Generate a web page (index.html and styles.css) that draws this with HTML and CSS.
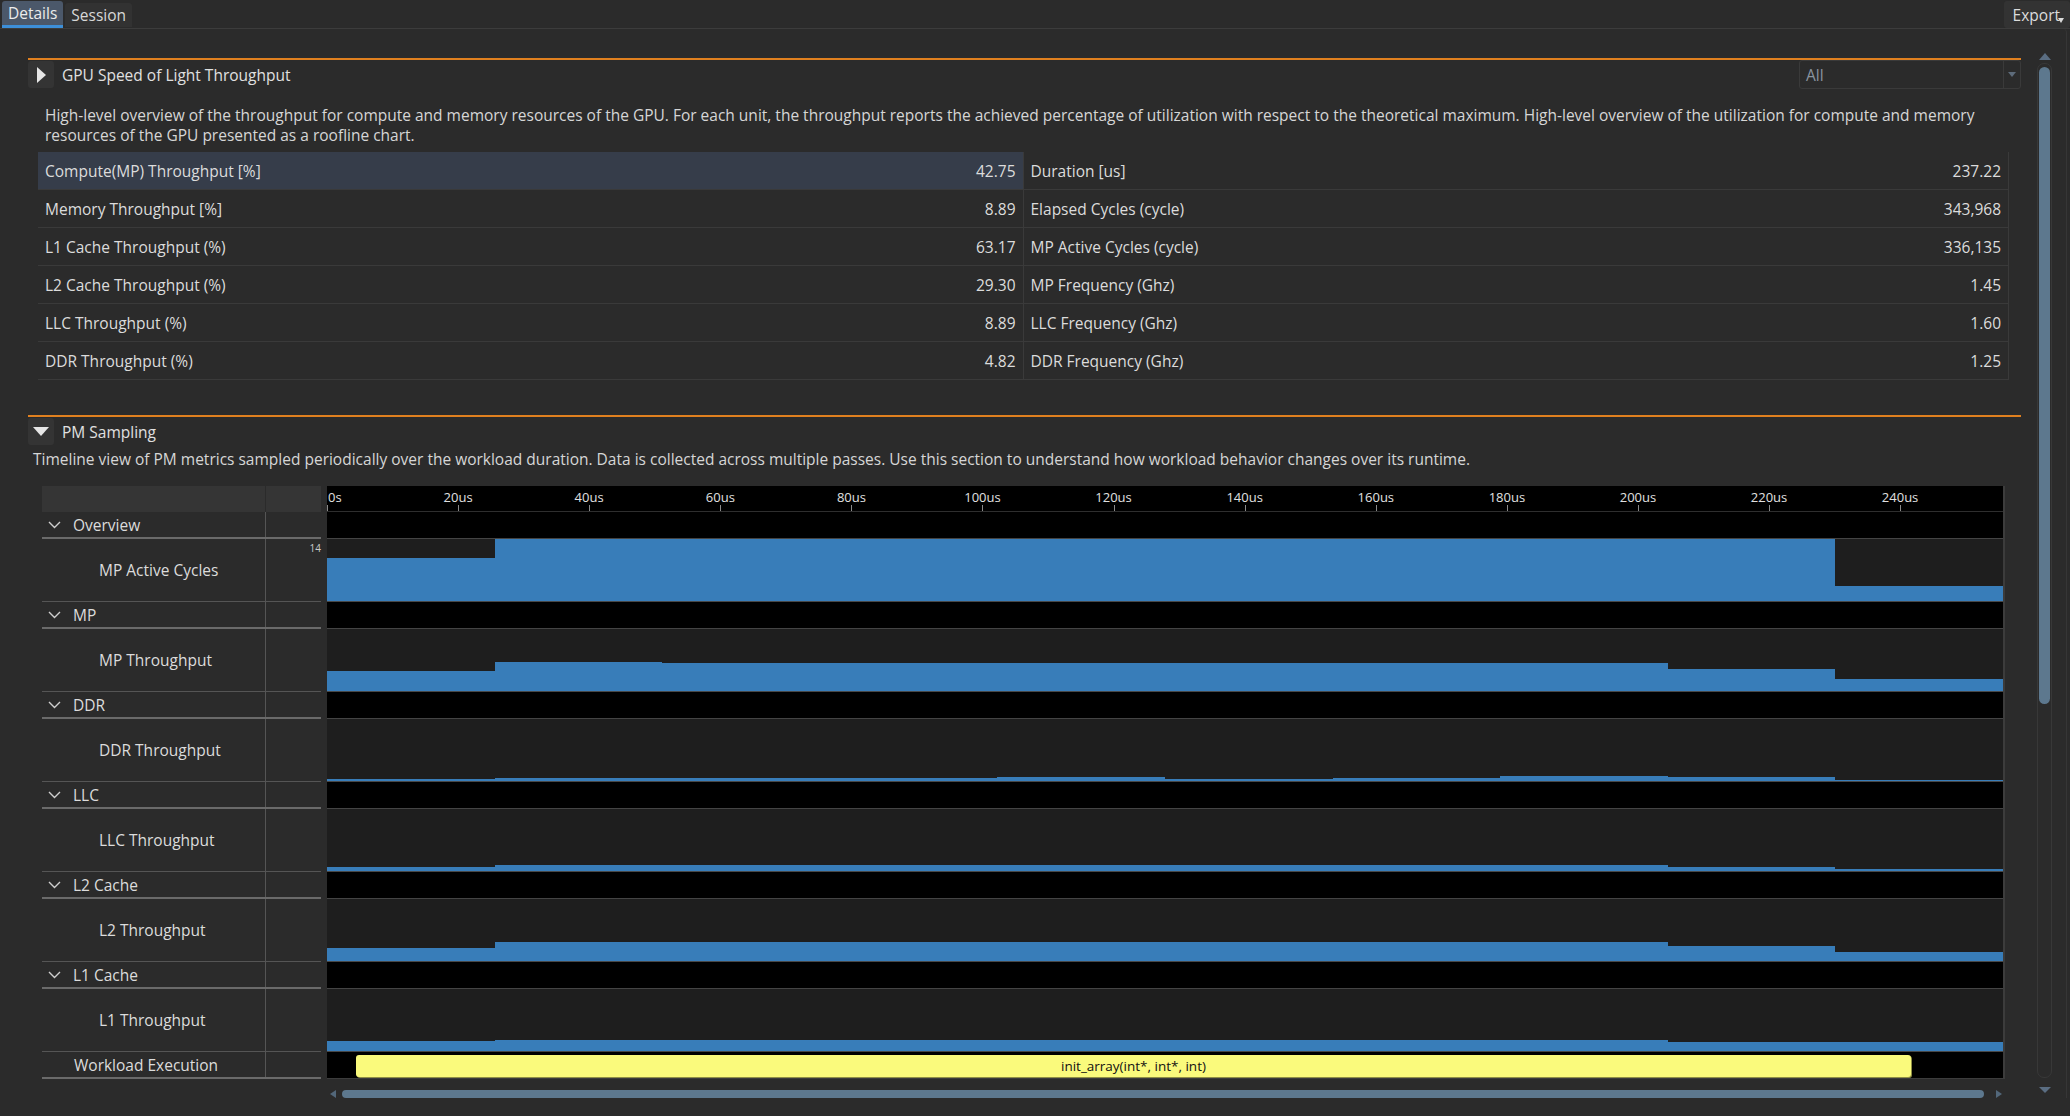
FILE: index.html
```html
<!DOCTYPE html>
<html lang="en">
<head>
  <meta charset="UTF-8">
  <meta name="viewport" content="width=device-width, initial-scale=1.0">
  <title>Details - PM Sampling</title>
  <link rel="stylesheet" href="styles.css">
</head>
<body>
  <!-- Tab bar -->
  <div class="tabbar">
    <div class="tabs">
      <a class="tab active" href="#">Details</a>
      <a class="tab" href="#">Session</a>
    </div>
    <button class="export">Export<span class="export-caret"></span></button>
  </div>

  <div class="main">
    <div class="content">

      <!-- GPU Speed of Light Throughput -->
      <div class="section sol">
        <div class="section-head">
          <span class="toggle">
            <svg width="10" height="16" viewBox="0 0 10 16"><path d="M1 0 L10 8 L1 16 Z" fill="#e6e6e6"/></svg>
          </span>
          <span class="section-title">GPU Speed of Light Throughput</span>
          <div class="select">All<span class="select-arrow"></span></div>
        </div>
        <p class="section-desc">High-level overview of the throughput for compute and memory resources of the GPU. For each unit, the throughput reports the achieved percentage of utilization with respect to the theoretical maximum. High-level overview of the utilization for compute and memory resources of the GPU presented as a roofline chart.</p>
        <div class="sol-table">
          <div class="sol-col">
            <div class="sol-row selected"><span>Compute(MP) Throughput [%]</span><span>42.75</span></div>
            <div class="sol-row"><span>Memory Throughput [%]</span><span>8.89</span></div>
            <div class="sol-row"><span>L1 Cache Throughput (%)</span><span>63.17</span></div>
            <div class="sol-row"><span>L2 Cache Throughput (%)</span><span>29.30</span></div>
            <div class="sol-row"><span>LLC Throughput (%)</span><span>8.89</span></div>
            <div class="sol-row"><span>DDR Throughput (%)</span><span>4.82</span></div>
          </div>
          <div class="sol-col">
            <div class="sol-row"><span>Duration [us]</span><span>237.22</span></div>
            <div class="sol-row"><span>Elapsed Cycles (cycle)</span><span>343,968</span></div>
            <div class="sol-row"><span>MP Active Cycles (cycle)</span><span>336,135</span></div>
            <div class="sol-row"><span>MP Frequency (Ghz)</span><span>1.45</span></div>
            <div class="sol-row"><span>LLC Frequency (Ghz)</span><span>1.60</span></div>
            <div class="sol-row"><span>DDR Frequency (Ghz)</span><span>1.25</span></div>
          </div>
        </div>
      </div>

      <!-- PM Sampling -->
      <div class="section pm">
        <div class="section-head">
          <span class="toggle">
            <svg width="16" height="9" viewBox="0 0 16 9"><path d="M0 0 H16 L8 9 Z" fill="#e6e6e6"/></svg>
          </span>
          <span class="section-title">PM Sampling</span>
        </div>
        <p class="section-desc">Timeline view of PM metrics sampled periodically over the workload duration. Data is collected across multiple passes. Use this section to understand how workload behavior changes over its runtime.</p>

        <div class="timeline">
          <div class="tl-labels">
            <div class="tl-head"><div class="tl-name"></div><div class="tl-scale"></div></div>

            <div class="tl-row group"><div class="tl-name"><svg class="chev" width="13" height="8" viewBox="0 0 13 8"><polyline points="1,1 6.5,6.5 12,1"/></svg>Overview</div><div class="tl-scale"></div></div>
            <div class="tl-row metric"><div class="tl-name">MP Active Cycles</div><div class="tl-scale">14</div></div>

            <div class="tl-row group"><div class="tl-name"><svg class="chev" width="13" height="8" viewBox="0 0 13 8"><polyline points="1,1 6.5,6.5 12,1"/></svg>MP</div><div class="tl-scale"></div></div>
            <div class="tl-row metric"><div class="tl-name">MP Throughput</div><div class="tl-scale"></div></div>

            <div class="tl-row group"><div class="tl-name"><svg class="chev" width="13" height="8" viewBox="0 0 13 8"><polyline points="1,1 6.5,6.5 12,1"/></svg>DDR</div><div class="tl-scale"></div></div>
            <div class="tl-row metric"><div class="tl-name">DDR Throughput</div><div class="tl-scale"></div></div>

            <div class="tl-row group"><div class="tl-name"><svg class="chev" width="13" height="8" viewBox="0 0 13 8"><polyline points="1,1 6.5,6.5 12,1"/></svg>LLC</div><div class="tl-scale"></div></div>
            <div class="tl-row metric"><div class="tl-name">LLC Throughput</div><div class="tl-scale"></div></div>

            <div class="tl-row group"><div class="tl-name"><svg class="chev" width="13" height="8" viewBox="0 0 13 8"><polyline points="1,1 6.5,6.5 12,1"/></svg>L2 Cache</div><div class="tl-scale"></div></div>
            <div class="tl-row metric"><div class="tl-name">L2 Throughput</div><div class="tl-scale"></div></div>

            <div class="tl-row group"><div class="tl-name"><svg class="chev" width="13" height="8" viewBox="0 0 13 8"><polyline points="1,1 6.5,6.5 12,1"/></svg>L1 Cache</div><div class="tl-scale"></div></div>
            <div class="tl-row metric"><div class="tl-name">L1 Throughput</div><div class="tl-scale"></div></div>

            <div class="tl-row group workload"><div class="tl-name">Workload Execution</div><div class="tl-scale"></div></div>
          </div>

          <div class="tl-tracks">
            <div class="tl-axis">
              <div class="tick first" style="left:0%"><span>0s</span></div>
              <div class="tick" style="left:7.82%"><span>20us</span></div>
              <div class="tick" style="left:15.64%"><span>40us</span></div>
              <div class="tick" style="left:23.47%"><span>60us</span></div>
              <div class="tick" style="left:31.29%"><span>80us</span></div>
              <div class="tick" style="left:39.11%"><span>100us</span></div>
              <div class="tick" style="left:46.93%"><span>120us</span></div>
              <div class="tick" style="left:54.75%"><span>140us</span></div>
              <div class="tick" style="left:62.58%"><span>160us</span></div>
              <div class="tick" style="left:70.40%"><span>180us</span></div>
              <div class="tick" style="left:78.22%"><span>200us</span></div>
              <div class="tick" style="left:86.04%"><span>220us</span></div>
              <div class="tick" style="left:93.86%"><span>240us</span></div>
            </div>

            <div class="track group"></div>
            <div class="track metric">
              <div class="bar" style="height:69%"></div><div class="bar" style="height:100%"></div><div class="bar" style="height:100%"></div><div class="bar" style="height:100%"></div><div class="bar" style="height:100%"></div>
              <div class="bar" style="height:100%"></div><div class="bar" style="height:100%"></div><div class="bar" style="height:100%"></div><div class="bar" style="height:100%"></div><div class="bar" style="height:24%"></div>
            </div>

            <div class="track group"></div>
            <div class="track metric">
              <div class="bar" style="height:32%"></div><div class="bar" style="height:47%"></div><div class="bar" style="height:45%"></div><div class="bar" style="height:45%"></div><div class="bar" style="height:45%"></div>
              <div class="bar" style="height:45%"></div><div class="bar" style="height:45%"></div><div class="bar" style="height:45%"></div><div class="bar" style="height:35%"></div><div class="bar" style="height:19%"></div>
            </div>

            <div class="track group"></div>
            <div class="track metric">
              <div class="bar" style="height:3%"></div><div class="bar" style="height:5%"></div><div class="bar" style="height:5%"></div><div class="bar" style="height:5%"></div><div class="bar" style="height:6.5%"></div>
              <div class="bar" style="height:4%"></div><div class="bar" style="height:5%"></div><div class="bar" style="height:8%"></div><div class="bar" style="height:6%"></div><div class="bar" style="height:2%"></div>
            </div>

            <div class="track group"></div>
            <div class="track metric">
              <div class="bar" style="height:6.5%"></div><div class="bar" style="height:9.5%"></div><div class="bar" style="height:9.5%"></div><div class="bar" style="height:9.5%"></div><div class="bar" style="height:9.5%"></div>
              <div class="bar" style="height:9.5%"></div><div class="bar" style="height:9.5%"></div><div class="bar" style="height:9.5%"></div><div class="bar" style="height:6.5%"></div><div class="bar" style="height:3%"></div>
            </div>

            <div class="track group"></div>
            <div class="track metric">
              <div class="bar" style="height:21%"></div><div class="bar" style="height:31%"></div><div class="bar" style="height:31%"></div><div class="bar" style="height:31%"></div><div class="bar" style="height:31%"></div>
              <div class="bar" style="height:31%"></div><div class="bar" style="height:31%"></div><div class="bar" style="height:31%"></div><div class="bar" style="height:24%"></div><div class="bar" style="height:15%"></div>
            </div>

            <div class="track group"></div>
            <div class="track metric">
              <div class="bar" style="height:16%"></div><div class="bar" style="height:18%"></div><div class="bar" style="height:18%"></div><div class="bar" style="height:18%"></div><div class="bar" style="height:18%"></div>
              <div class="bar" style="height:18%"></div><div class="bar" style="height:18%"></div><div class="bar" style="height:18%"></div><div class="bar" style="height:15%"></div><div class="bar" style="height:15%"></div>
            </div>

            <div class="track group workload">
              <div class="kernel" style="margin-left:1.73%; width:92.78%">init_array(int*, int*, int)</div>
            </div>
          </div>
        </div>

        <div class="hscroll">
          <span class="hs-left"></span>
          <span class="hs-thumb"></span>
          <span class="hs-right"></span>
        </div>
      </div>
    </div>

    <!-- Vertical scrollbar -->
    <div class="vscroll">
      <span class="vs-up"></span>
      <div class="vs-track"><div class="vs-thumb"></div></div>
      <span class="vs-down"></span>
    </div>
  </div>
</body>
</html>
```

FILE: styles.css
```css
/* Global */
* {
  box-sizing: border-box;
}
body {
  margin: 0;
  height: 1116px;
  overflow: hidden;
  background: #2b2b2b;
  color: #dcdcdc;
  font-family: 'Open Sans', 'Noto Sans', Arial, sans-serif;
  font-size: 15.5px;
}

/* Tab bar */
.tabbar {
  display: flex;
  justify-content: space-between;
  height: 29px;
  border-bottom: 1px solid #3c3c3c;
}
.tabs {
  display: flex;
  gap: 2px;
  padding: 1px 0 0 2px;
}
.tab {
  display: flex;
  align-items: center;
  height: 24px;
  margin-top: 2px;
  padding: 0 6px;
  background: #323232;
  border-radius: 3px 3px 0 0;
  color: #d8d8d8;
  text-decoration: none;
}
.tab.active {
  height: 27px;
  margin-top: 0;
  background: #4b586a;
  border-bottom: 3px solid #3d8fd8;
  color: #ececec;
}
.export {
  position: relative;
  height: 27px;
  margin-top: 1px;
  padding: 0 10px 0 9px;
  background: #333333;
  border: none;
  border-radius: 3px;
  color: #dcdcdc;
  font: inherit;
}
.export-caret {
  position: absolute;
  right: 6px;
  bottom: 5px;
  border-left: 3px solid transparent;
  border-right: 3px solid transparent;
  border-top: 5px solid #dcdcdc;
}

/* Main area */
.main {
  display: flex;
  margin-right: 3px;
  border-right: 1px solid #363636;
  border-top-right-radius: 4px;
}
.content {
  width: 2021px;
  padding-left: 28px;
}

/* Sections */
.section {
  border-top: 2px solid #e0801f;
}
.sol {
  margin-top: 29px;
}
.pm {
  margin-top: 35px;
}
.section-head {
  display: flex;
  align-items: center;
  height: 29px;
}
.toggle {
  display: flex;
  align-items: center;
  justify-content: center;
  width: 26px;
  height: 27px;
  background: #343434;
  border-radius: 3px;
}
.section-title {
  margin-left: 8px;
  color: #e0e0e0;
}
.select {
  display: flex;
  align-items: center;
  width: 222px;
  height: 29px;
  margin-left: auto;
  padding-left: 6px;
  border: 1px solid #3a3a3a;
  border-radius: 3px;
  color: #8a94a0;
}
.select-arrow {
  display: flex;
  align-items: center;
  justify-content: center;
  width: 17px;
  height: 100%;
  margin-left: auto;
  border-left: 1px solid #3a3a3a;
}
.select-arrow::after {
  content: '';
  border-left: 4px solid transparent;
  border-right: 4px solid transparent;
  border-top: 5px solid #5d6b7a;
}
.section-desc {
  margin: 0;
  line-height: 20px;
  color: #d6d6d6;
}
.sol .section-desc {
  margin-top: 16px;
  padding: 0 12px 0 17px;
}
.pm .section-desc {
  margin-top: 3px;
  padding-left: 5px;
}

/* Speed of light table */
.sol-table {
  display: flex;
  margin: 7px 12px 0 10px;
  border-right: 1px solid #3a3a3a;
}
.sol-col {
  flex: 1;
}
.sol-col + .sol-col {
  border-left: 1px solid #3a3a3a;
}
.sol-row {
  display: flex;
  justify-content: space-between;
  align-items: center;
  height: 38px;
  padding: 0 7px;
  border-bottom: 1px solid #3a3a3a;
}
.sol-row.selected {
  background: #363d4a;
}

/* Timeline */
.timeline {
  display: flex;
  gap: 6px;
  margin: 17px 16px 0 14px;
}
.tl-labels {
  width: 279px;
}
.tl-head {
  display: flex;
  height: 26px;
}
.tl-head .tl-name,
.tl-head .tl-scale {
  background: #353535;
}
.tl-head .tl-name {
  border-right-color: #2b2b2b;
}
.tl-name {
  display: flex;
  align-items: center;
  width: 224px;
  border-right: 1px solid #555555;
}
.tl-scale {
  flex: 1;
}
.tl-row {
  display: flex;
}
.tl-row.group {
  height: 27px;
  border-bottom: 2px solid #6a6a6a;
}
.tl-row.metric {
  height: 63px;
  border-bottom: 1px solid #555555;
}
.group .tl-name {
  gap: 12px;
  padding-left: 6px;
}
.metric .tl-name {
  padding-left: 57px;
}
.workload .tl-name {
  padding-left: 32px;
}
.metric .tl-scale {
  padding-top: 2px;
  font-size: 10px;
  text-align: right;
  color: #cccccc;
}
.chev {
  fill: none;
  stroke: #cfcfcf;
  stroke-width: 1.4;
}

.tl-tracks {
  flex: 1;
  border-right: 2px solid #3c3c3c;
}
.tl-axis {
  position: relative;
  height: 26px;
  background: #000000;
  border-bottom: 1px solid #2e2e2e;
}
.tick {
  position: absolute;
  top: 0;
  bottom: 0;
}
.tick span {
  position: absolute;
  top: 2px;
  transform: translateX(-50%);
  font-size: 13px;
  color: #e0e0e0;
  white-space: nowrap;
}
.tick.first span {
  left: 1px;
  transform: none;
}
.tick::after {
  content: '';
  position: absolute;
  bottom: 0;
  left: 0;
  width: 1px;
  height: 6px;
  background: #8a8a8a;
}
.track {
  display: flex;
  align-items: flex-end;
}
.track.group {
  height: 27px;
  background: #000000;
  border-bottom: 1px solid #444444;
}
.track.metric {
  height: 63px;
  background: #1e1e1e;
  border-bottom: 1px solid #484848;
}
.bar {
  flex: 1;
  background: #387db9;
}
.track.workload {
  align-items: flex-start;
  padding-top: 3px;
  border-bottom-color: #3c3c3c;
}
.kernel {
  display: flex;
  align-items: center;
  justify-content: center;
  height: 22px;
  background: #fafa7c;
  border-radius: 3px;
  box-shadow: 1px 1px 0 #8f8f45;
  color: #111111;
  font-size: 13.5px;
}

/* Scrollbars */
.hscroll {
  display: flex;
  align-items: center;
  width: 1672px;
  height: 8px;
  margin: 11px 0 0 302px;
}
.hs-left {
  border-top: 4px solid transparent;
  border-bottom: 4px solid transparent;
  border-right: 6px solid #52677a;
}
.hs-thumb {
  flex: 1;
  height: 8px;
  margin: 0 12px 0 6px;
  background: #5d788e;
  border-radius: 4px;
}
.hs-right {
  border-top: 4px solid transparent;
  border-bottom: 4px solid transparent;
  border-left: 6px solid #52677a;
}
.vscroll {
  display: flex;
  flex-direction: column;
  align-items: center;
  width: 15px;
  margin-left: 16px;
  padding-top: 24px;
}
.vs-up {
  border-left: 6px solid transparent;
  border-right: 6px solid transparent;
  border-bottom: 7px solid #5a6d82;
}
.vs-track {
  width: 15px;
  height: 1015px;
  margin-top: 3px;
  padding: 3px 1px;
  border: 1px solid #383838;
  border-radius: 7px;
}
.vs-thumb {
  height: 637px;
  background: #5d788e;
  border-radius: 6px;
}
.vs-down {
  margin-top: 9px;
  border-left: 6px solid transparent;
  border-right: 6px solid transparent;
  border-top: 6px solid #5a6d82;
}
```
